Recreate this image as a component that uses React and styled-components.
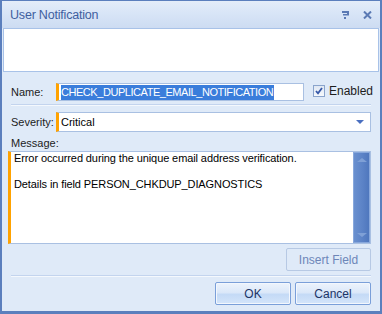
import React from 'react';
import styled, { createGlobalStyle } from 'styled-components';

const GlobalStyle = createGlobalStyle`
	html, body {
		margin: 0;
		padding: 0;
		background: #ffffff;
	}
	body {
		font-family: Tahoma, "Liberation Sans", Arial, sans-serif;
		font-size: 11px;
	}
`;

const Window = styled.div`
	box-sizing: border-box;
	width: 382px;
	height: 314px;
	display: flex;
	flex-direction: column;
	background: #dfeaf8;
	border: 1px solid #5b7fbd;
	border-bottom-width: 3px;
	border-left-width: 2px;
	border-right-width: 2px;
	overflow: hidden;
`;

const TitleBar = styled.div`
	height: 27px;
	flex: none;
	display: flex;
	align-items: center;
	padding: 0 8px 0 8px;
	background: linear-gradient(to bottom, #e4edf9 0%, #d8e5f7 45%, #cddcf2 100%);
`;

const Title = styled.div`
	flex: 1;
	font-size: 12.5px;
	color: #3f5f9f;
	letter-spacing: -0.2px;
`;

const TitleButtons = styled.div`
	display: flex;
	align-items: center;
	gap: 14px;
	padding-top: 1px;
`;

const HeaderPanel = styled.div`
	height: 42px;
	flex: none;
	margin: 0 1px;
	background: #ffffff;
	border: 1px solid #a8c2e8;
`;

const Body = styled.div`
	flex: 1;
	display: flex;
	flex-direction: column;
	padding: 11px 9px 0 9px;
`;

const Row = styled.div`
	display: flex;
	align-items: center;
	height: ${props => props.h || 18}px;
`;

const Label = styled.label`
	width: 45px;
	flex: none;
	color: #1c1c1c;
`;

const Field = styled.div`
	box-sizing: border-box;
	position: relative;
	display: flex;
	align-items: center;
	height: ${props => props.h || 18}px;
	width: ${props => (props.w ? props.w + 'px' : 'auto')};
	flex: ${props => (props.w ? 'none' : '1')};
	background: #ffffff;
	border: 1px solid #a9c0e2;
	border-left: 3px solid #ffa200;
	padding-left: 2px;
	color: #000000;
`;

const Selected = styled.span`
	background: #3a7ddb;
	color: #ffffff;
	line-height: 15px;
	padding: 0 1px 0 0;
	letter-spacing: -0.45px;
`;

const CheckWrap = styled.div`
	display: flex;
	align-items: center;
	gap: 4px;
	margin-left: 9px;
	padding-bottom: 3px;
	color: #1c1c1c;
	font-size: 12px;
`;

const CheckBox = styled.span`
	box-sizing: border-box;
	width: 12px;
	height: 12px;
	display: flex;
	align-items: center;
	justify-content: center;
	background: linear-gradient(to bottom, #dfe7f3, #f6f9fd);
	border: 1px solid #8aa4cc;
`;

const Separator = styled.div`
	height: 1px;
	background: #c3d4ee;
	border-bottom: 1px solid #f4f8fd;
	margin: ${props => props.m || '3px 0 6px 0'};
`;

const DropArrow = styled.span`
	position: absolute;
	right: 6px;
	top: 7px;
	width: 0;
	height: 0;
	border-left: 4px solid transparent;
	border-right: 4px solid transparent;
	border-top: 4px solid #4a6fc0;
`;

const MessageLabel = styled.div`
	margin: 5px 0 2px 0;
	color: #1c1c1c;
`;

const MessageBox = styled.div`
	box-sizing: border-box;
	height: 93px;
	margin-left: -3px;
	display: flex;
	background: #ffffff;
	border: 1px solid #a9c0e2;
	border-left: 3px solid #ffa200;
`;

const MessageText = styled.div`
	flex: 1;
	padding: 0 3px;
	line-height: 13px;
	letter-spacing: -0.1px;
	color: #000000;
	white-space: pre-wrap;
`;

const ScrollBar = styled.div`
	width: 17px;
	flex: none;
	display: flex;
	flex-direction: column;
	justify-content: space-between;
	align-items: center;
	padding: 5px 0;
	box-sizing: border-box;
	background: linear-gradient(to right, #6a90cf, #5b82c6 60%, #4f77bd);
	border: 1px solid #88a8dc;
`;

const ScrollArrow = styled.span`
	width: 0;
	height: 0;
	border-left: 5px solid transparent;
	border-right: 5px solid transparent;
	${props =>
		props.down
			? 'border-top: 4px solid #7fa0d6;'
			: 'border-bottom: 4px solid #7fa0d6;'}
`;

const ActionRow = styled.div`
	display: flex;
	justify-content: flex-end;
	gap: 4px;
	margin-top: ${props => props.mt || 0}px;
`;

const Button = styled.button`
	box-sizing: border-box;
	width: ${props => props.w || 76}px;
	height: 23px;
	padding: 0;
	font-family: Tahoma, "Liberation Sans", Arial, sans-serif;
	font-size: 12px;
	border-radius: 2px;
	color: ${props => (props.disabled ? '#6d86b8' : '#1c3466')};
	border: 1px solid ${props => (props.disabled ? '#b7c9e4' : '#7a9fd9')};
	background: ${props =>
		props.disabled
			? '#dfeaf8'
			: 'linear-gradient(to bottom, #edf3fc 0%, #dbe8f9 45%, #c4daf6 55%, #d4e5fa 100%)'};
	box-shadow: ${props => (props.disabled ? 'none' : 'inset 0 0 0 1px #f3f7fd')};
`;

function PinIcon() {
	return (
		<svg width="7" height="8" viewBox="0 0 7 8">
			<rect x="0" y="0" width="7" height="2" fill="#5a79b4" />
			<rect x="5" y="1" width="2" height="3" fill="#5a79b4" />
			<rect x="1" y="3" width="6" height="1.5" fill="#5a79b4" />
			<rect x="2" y="6" width="2" height="2" fill="#5a79b4" />
		</svg>
	);
}

function CloseIcon() {
	return (
		<svg width="9" height="8" viewBox="0 0 9 8">
			<path d="M1 0.5 L8 7.5 M8 0.5 L1 7.5" stroke="#5a79b4" strokeWidth="2" />
		</svg>
	);
}

function CheckMark() {
	return (
		<svg width="8" height="8" viewBox="0 0 8 8">
			<path d="M1 4 L3 6.3 L7 1" stroke="#3658a8" strokeWidth="1.8" fill="none" />
		</svg>
	);
}

const message = 'Error occurred during the unique email address verification.\n\nDetails in field PERSON_CHKDUP_DIAGNOSTICS';

export default function App() {
	return (
		<>
			<GlobalStyle />
			<Window>
				<TitleBar>
					<Title>User Notification</Title>
					<TitleButtons>
						<PinIcon />
						<CloseIcon />
					</TitleButtons>
				</TitleBar>
				<HeaderPanel />
				<Body>
					<Row>
						<Label>Name:</Label>
						<Field w={248}>
							<Selected>CHECK_DUPLICATE_EMAIL_NOTIFICATION</Selected>
						</Field>
						<CheckWrap>
							<CheckBox>
								<CheckMark />
							</CheckBox>
							Enabled
						</CheckWrap>
					</Row>
					<Separator />
					<Row h={20}>
						<Label>Severity:</Label>
						<Field h={20}>
							Critical
							<DropArrow />
						</Field>
					</Row>
					<MessageLabel>Message:</MessageLabel>
					<MessageBox>
						<MessageText>{message}</MessageText>
						<ScrollBar>
							<ScrollArrow />
							<ScrollArrow down />
						</ScrollBar>
					</MessageBox>
					<ActionRow mt={4}>
						<Button w={85} disabled>
							Insert Field
						</Button>
					</ActionRow>
					<Separator m="4px 0 5px 0" />
					<ActionRow>
						<Button>OK</Button>
						<Button>Cancel</Button>
					</ActionRow>
				</Body>
			</Window>
		</>
	);
}
